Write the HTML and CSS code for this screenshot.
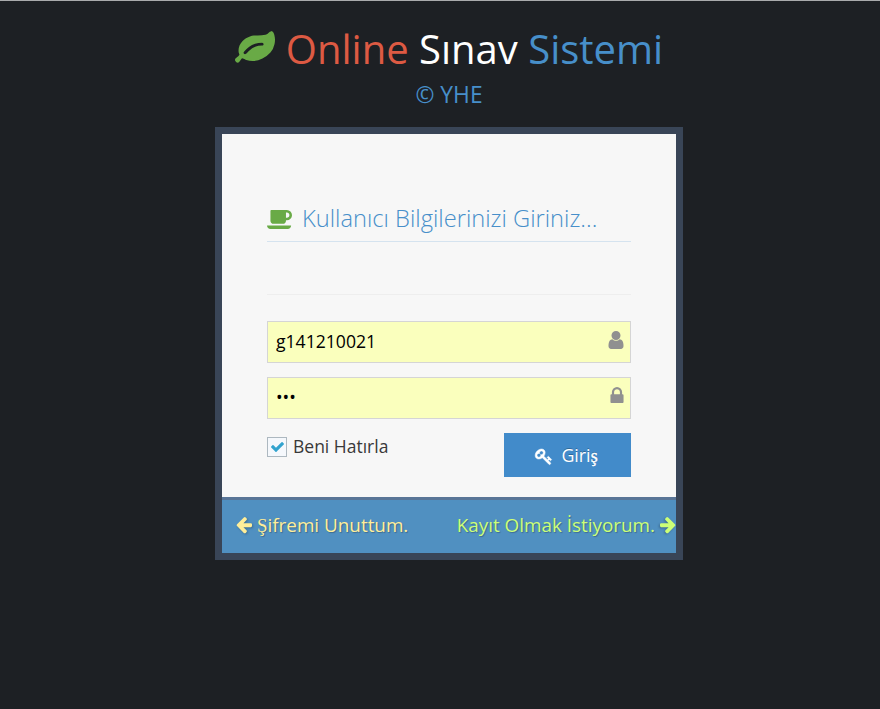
FILE: index.html
```html
<!DOCTYPE html>
<html lang="tr">
<head>
<meta charset="utf-8">
<title>Online Sınav Sistemi</title>
<link rel="stylesheet" href="styles.css">
</head>
<body>
<main class="login">
  <header class="brand">
    <h1 class="brand-title">
      <svg class="icon-leaf" viewBox="0 128 1792 1408"><path d="M1280 704q0-26-19-45t-45-19q-172 0-318 49.500t-259.500 134-235.500 219.500q-19 21-19 45 0 26 19 45t45 19q24 0 45-19 27-24 74-71t67-66q137-124 268.500-176t313.500-52q26 0 45-19t19-45zm512-198q0 95-20 193-46 224-184.500 383t-357.500 268q-214 108-438 108-148 0-286-47-15-5-88-42t-96-37q-16 0-39.500 32t-45 70-52.500 70-60 32q-43 0-63.500-17.500t-45.500-59.500q-2-4-6-11t-5.500-10-3-9.500-1.500-13.500q0-35 31-73.500t68-65.500 68-56 31-48q0-4-14-38t-16-44q-9-51-9-104 0-115 43.500-220t119-184.500 170.500-139 204-95.500q55-18 145-25.500t179.500-9 178.500-6 163.500-24 113.500-56.500l29.500-29.500t29.500-28 27-20 36.500-16 43.500-4.500q39 0 70.500 46t47.500 112 24 124 8 96z"/></svg>
      <span class="brand-text"><span class="red">Online</span> <span class="white">Sınav</span> <span class="blue">Sistemi</span></span>
    </h1>
    <h4 class="brand-owner">© YHE</h4>
  </header>
  <section class="box">
    <form class="box-main">
      <h4 class="box-heading">
        <svg class="icon-coffee" viewBox="0 256 1856 1408"><path d="M1664 640q0-80-56-136t-136-56h-64v384h64q80 0 136-56t56-136zm-1664 768h1792q0 106-75 181t-181 75h-1280q-106 0-181-75t-75-181zm1856-768q0 159-112.500 271.500t-271.500 112.500h-64v32q0 92-66 158t-158 66h-704q-92 0-158-66t-66-158v-736q0-26 19-45t45-19h1152q159 0 271.500 112.500t112.500 271.500z"/></svg>
        <span>Kullanıcı Bilgilerinizi Giriniz...</span>
      </h4>
      <hr class="rule">
      <div class="field">
        <input class="field-input" type="text" value="g141210021">
        <svg class="icon-user" viewBox="256 128 1280 1536"><path d="M1536 1399q0 109-62.500 187t-150.500 78h-854q-88 0-150.500-78t-62.500-187q0-85 8.500-160.500t31.500-152 58.500-131 94-89 134.500-34.500q131 128 313 128t313-128q76 0 134.500 34.500t94 89 58.500 131 31.500 152 8.500 160.500zm-256-887q0 159-112.500 271.500t-271.500 112.500-271.500-112.500-112.500-271.500 112.500-271.500 271.500-112.500 271.500 112.500 112.500 271.500z"/></svg>
      </div>
      <div class="field">
        <span class="field-input dots">•••</span>
        <svg class="icon-lock" viewBox="320 128 1152 1408"><path d="M640 768h512v-192q0-106-75-181t-181-75-181 75-75 181v192zm832 96v576q0 40-28 68t-68 28h-960q-40 0-68-28t-28-68v-576q0-40 28-68t68-28h32v-192q0-184 132-316t316-132 316 132 132 316v192h32q40 0 68 28t28 68z"/></svg>
      </div>
      <div class="actions">
        <label class="remember">
          <span class="check"><svg viewBox="121 334 1550 1188"><path d="M1671 566q0 40-28 68l-724 724-136 136q-28 28-68 28t-68-28l-136-136-362-362q-28-28-28-68t28-68l136-136q28-28 68-28t68 28l294 295 656-657q28-28 68-28t68 28l136 136q28 28 28 68z"/></svg></span>
          <span>Beni Hatırla</span>
        </label>
        <button class="submit" type="button">
          <svg class="icon-key" viewBox="128 128 1555 1536"><path d="M832 512q0-80-56-136t-136-56-136 56-56 136q0 42 19 83-41-19-83-19-80 0-136 56t-56 136 56 136 136 56 136-56 56-136q0-42-19-83 41 19 83 19 80 0 136-56t56-136zm851 704q0 17-49 66t-66 49q-9 0-28.500-16t-36.500-33-38.500-40-24.500-26l-96 96 220 220q28 28 28 68 0 42-39 81t-81 39q-40 0-68-28l-671-671q-176 131-365 131-163 0-265.500-102.500t-102.500-265.500q0-160 95-313t248-248 313-95q163 0 265.500 102.500t102.500 265.500q0 189-131 365l355 355 96-96q-3-3-26-24.500t-40-38.500-33-36.500-16-28.500q0-17 49-66t66-49q13 0 23 10 6 6 46 44.500t82 79.500 86.500 86 73 78 28.500 41z"/></svg>
          <span>Giri<span class="alt">ş</span></span>
        </button>
      </div>
    </form>
    <footer class="toolbar">
      <a class="forgot"><svg class="icon-arrow" viewBox="128 186 1536 1612"><path d="M1664 896v128q0 53-32.500 90.500t-84.500 37.500h-704l293 294q38 36 38 90t-38 90l-75 76q-37 37-90 37-52 0-91-37l-651-652q-37-37-37-90 0-52 37-91l651-650q38-38 91-38 52 0 90 38l75 74q38 38 38 91t-38 91l-293 293h704q52 0 84.500 37.500t32.500 90.500z"/></svg><span><span class="alt">Ş</span>ifremi Unuttum.</span></a>
      <a class="register"><span>Kayıt Olmak İstiyorum.</span><svg class="icon-arrow flip" viewBox="128 186 1536 1612"><path d="M1664 896v128q0 53-32.500 90.500t-84.500 37.500h-704l293 294q38 36 38 90t-38 90l-75 76q-37 37-90 37-52 0-91-37l-651-652q-37-37-37-90 0-52 37-91l651-650q38-38 91-38 52 0 90 38l75 74q38 38 38 91t-38 91l-293 293h704q52 0 84.500 37.500t32.500 90.500z"/></svg></a>
    </footer>
  </section>
</main>
</body>
</html>
```
FILE: styles.css
```css
* { box-sizing: border-box; }
html, body { height: 100%; }
body {
  margin: 0;
  background: #1d2024;
  border-top: 1px solid #a9abac;
  font-family: "Open Sans", sans-serif;
  font-size: 17px;
  color: #393939;
  overflow: hidden;
}
svg { fill: currentColor; display: block; flex: none; }
h1, h4 { margin: 0; font-weight: 400; white-space: nowrap; }
.login { width: 468px; margin: 0 auto 0 215px; }
.brand { height: 126px; padding-top: 19px; }
.brand-title { display: flex; justify-content: center; gap: 11px; font-size: 40px; line-height: 58px; height: 59px; }
.icon-leaf { width: 40px; height: 32px; margin-top: 11px; color: #69aa46; }
.red { color: #dd5a43; }
.white { color: #fff; }
.blue, .brand-owner { color: #478fca; }
.brand-owner { font-size: 22.8px; line-height: 32px; text-align: center; }
.box { border: 7px solid #394557; background: #f7f7f7; height: 433px; }
.box-main { height: 363px; padding: 65px 45px 0; }
.box-heading {
  display: flex;
  align-items: flex-start;
  gap: 10px;
  height: 43px;
  border-bottom: 1px solid #d5e3ef;
  font-size: 23.7px;
  font-weight: 300;
  line-height: 38px;
  color: #478fca;
}
.icon-coffee { width: 25px; height: 19px; margin-top: 11px; color: #69aa46; }
.rule { margin: 52px 0 26px; border: 0; border-top: 1px solid #eee; }
.field { position: relative; height: 42px; margin-bottom: 14px; }
.field-input {
  display: block;
  width: 100%;
  height: 42px;
  padding: 0 8px 2px;
  border: 1px solid #d5d5d5;
  background: #faffbd;
  color: #000;
  font: 17.6px/38px "Open Sans", sans-serif;
}
.icon-user, .icon-lock { position: absolute; color: #909090; }
.icon-user { width: 16px; height: 18px; right: 7px; top: 10px; }
.icon-lock { width: 14px; height: 16px; right: 7px; top: 10px; }
.actions { display: flex; justify-content: space-between; }
.remember { display: flex; gap: 6px; font-size: 17.5px; line-height: 26px; }
.check {
  width: 20px;
  height: 20px;
  margin-top: 4px;
  padding: 4px 3px;
  border: 1px solid #adb8c0;
  background: #f5f8fc;
  color: #32a3ce;
}
.check svg { width: 13px; height: 10px; }
.submit {
  display: flex;
  align-items: center;
  justify-content: center;
  gap: 9px;
  width: 127px;
  height: 44px;
  padding: 0 1px 0 0;
  border: 0;
  background: #428bca;
  color: #fff;
  font: 17.8px/26px "Open Sans", sans-serif;
  text-shadow: 0 -1px 0 rgba(0, 0, 0, .25);
}
.icon-key { width: 16px; height: 15px; margin-top: 2px; stroke: currentColor; stroke-width: 50; overflow: visible; }
.alt { font-family: "Liberation Serif", serif; }
.submit .alt { -webkit-text-stroke: .4px currentColor; }
.toolbar {
  display: flex;
  justify-content: space-between;
  height: 56px;
  padding-left: 14px;
  border-top: 3px solid #597597;
  background: #5090c1;
  font-size: 18.86px;
  line-height: 50px;
  white-space: nowrap;
  text-shadow: 1px 1px 1px rgba(0, 0, 0, .25);
}
.forgot, .register { display: flex; align-items: center; gap: 5px; height: 50px; }
.forgot { color: #fe9; }
.register { color: #cf7; }
.icon-arrow { width: 16px; height: 17px; filter: drop-shadow(1px 1px 1px rgba(0, 0, 0, .25)); }
.flip { transform: scaleX(-1); }
```
